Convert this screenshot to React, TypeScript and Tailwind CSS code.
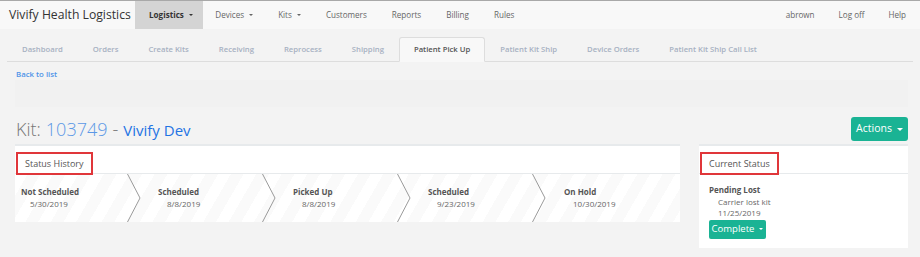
import React from "react";

function Caret({ size = 3 }: { size?: number }) {
  return (
    <span
      className="inline-block w-0 h-0 border-l-[3px] border-r-[3px] border-t-[3px] border-l-transparent border-r-transparent border-t-current ml-[5px] align-middle"
      style={{ borderLeftWidth: size, borderRightWidth: size, borderTopWidth: size }}
    />
  );
}

const navItems = [
  { label: "Logistics", caret: true, active: true },
  { label: "Devices", caret: true },
  { label: "Kits", caret: true },
  { label: "Customers" },
  { label: "Reports" },
  { label: "Billing" },
  { label: "Rules" },
];

const tabs = [
  "Dashboard",
  "Orders",
  "Create Kits",
  "Receiving",
  "Reprocess",
  "Shipping",
  "Patient Pick Up",
  "Patient Kit Ship",
  "Device Orders",
  "Patient Kit Ship Call List",
];

const steps = [
  { label: "Not Scheduled", date: "5/30/2019" },
  { label: "Scheduled", date: "8/8/2019" },
  { label: "Picked Up", date: "8/8/2019" },
  { label: "Scheduled", date: "9/23/2019" },
  { label: "On Hold", date: "10/30/2019" },
];

export default function App() {
  return (
    <div className="w-[920px] h-[257px] overflow-hidden bg-[#f3f3f3] font-['Open_Sans',sans-serif]">
      {/* Top navbar */}
      <nav className="h-[29px] bg-[#f8f8f8] border-t border-[#a8a8a8] flex items-stretch">
        <div className="w-[135px] pl-[9px] flex items-center text-[12.2px] text-[#333] whitespace-nowrap">
          Vivify Health Logistics
        </div>
        <div className="flex items-stretch text-[8.1px]">
          {navItems.map((n) => (
            <div
              key={n.label}
              className={
                n.active
                  ? "flex items-center pl-[14px] pr-[10px] bg-[#d4d4d4] font-bold text-[#333]"
                  : "flex items-center px-[12.5px] text-[#666]"
              }
            >
              {n.label}
              {n.caret && <Caret size={2.5} />}
            </div>
          ))}
        </div>
        <div className="ml-auto flex items-stretch text-[8.1px] text-[#666] pr-[2px]">
          <div className="flex items-center px-[12px]">abrown</div>
          <div className="flex items-center px-[12px]">Log off</div>
          <div className="flex items-center px-[12px]">Help</div>
        </div>
      </nav>

      {/* Tabs */}
      <div className="mx-[7px] h-[33px] flex items-end border-b border-[#dddddd]">
        {tabs.map((t) => {
          const active = t === "Patient Pick Up";
          return (
            <div
              key={t}
              className={
                active
                  ? "h-[25px] mb-[-1px] px-[14px] flex items-center border border-[#dddddd] border-b-transparent rounded-t-[3px] bg-[#f8f8f8] text-[7.7px] font-semibold text-[#555] whitespace-nowrap"
                  : "h-[25px] mb-[-1px] px-[14px] flex items-center border border-transparent text-[7.7px] font-semibold text-[#a7b1c2] whitespace-nowrap"
              }
            >
              {t}
            </div>
          );
        })}
      </div>

      {/* Back to list */}
      <div className="mt-[7px] pl-[16px] h-[10px] leading-[10px] text-[7.8px] font-semibold text-[#4f93e8]">
        Back to list
      </div>

      {/* subtle band */}
      <div className="ml-[15px] w-[893px] h-[27px] mt-[1px] bg-[#f1f1f1]" />

      {/* Kit heading */}
      <div className="ml-[15px] w-[893px] mt-[10px] h-[24px] flex items-center justify-between">
        <div className="flex items-baseline pl-[1px] whitespace-nowrap">
          <span className="text-[18px] font-light text-[#777]">Kit: </span>
          <span className="text-[18px] font-light text-[#5b98e6] ml-[5px]">103749</span>
          <span className="text-[18px] font-light text-[#777] ml-[5px]">-</span>
          <span className="text-[15px] text-[#1f74e4] ml-[5px]">Vivify Dev</span>
        </div>
        <div className="w-[57px] h-[24px] rounded-[3px] bg-[#1ab394] text-white text-[10.5px] flex items-center justify-center">
          Actions
          <Caret size={3} />
        </div>
      </div>

      {/* Panels */}
      <div className="ml-[15px] w-[893px] mt-[3px] flex gap-[19px] items-start">
        {/* Status History */}
        <div className="w-[665px] bg-white border-t-2 border-[#e7eaec]">
          <div className="h-[28px] border-b border-[#e7eaec] pt-[3px] pl-[1px]">
            <div className="inline-flex items-center h-[23px] border-2 border-[#e0363a] px-[7px] text-[9px] text-[#555]">
              Status History
            </div>
          </div>
          <div className="h-[48px] flex bg-[repeating-linear-gradient(120deg,#ffffff_0px,#ffffff_11px,#fafafa_11px,#fafafa_22px)]">
            {steps.map((s, i) => (
              <div
                key={i}
                className={
                  i === 0
                    ? "relative w-[113px] h-full pl-[6px] flex flex-col justify-center"
                    : i === 4
                    ? "relative flex-1 h-full pl-[31px] flex flex-col justify-center"
                    : "relative w-[135px] h-full pl-[30px] flex flex-col justify-center"
                }
              >
                <div className="text-[8px] font-bold text-[#555] leading-[12px] whitespace-nowrap">{s.label}</div>
                <div className="text-[8px] text-[#666] leading-[12px] pl-[9px] whitespace-nowrap">{s.date}</div>
                {i < 4 && (
                  <svg
                    className="absolute top-0 right-[-13px]"
                    width="14"
                    height="48"
                    viewBox="0 0 14 48"
                  >
                    <polyline points="0.5,0 13,24 0.5,48" fill="none" stroke="#9a9a9a" strokeWidth="1" />
                  </svg>
                )}
              </div>
            ))}
          </div>
        </div>

        {/* Current Status */}
        <div className="w-[209px] bg-white border-t-2 border-[#e7eaec]">
          <div className="h-[28px] border-b border-[#e7eaec] pt-[3px] pl-[1px]">
            <div className="inline-flex items-center h-[23px] border-2 border-[#e0363a] px-[7px] text-[9px] text-[#555]">
              Current Status
            </div>
          </div>
          <div className="h-[74px] pt-[10px] pl-[10px]">
            <div className="text-[8px] font-bold text-[#555] leading-[11.5px]">Pending Lost</div>
            <div className="text-[8px] text-[#666] leading-[11.5px] pl-[9px]">Carrier lost kit</div>
            <div className="text-[8px] text-[#666] leading-[11.5px] pl-[9px]">11/25/2019</div>
            <div className="mt-[1px] w-[57px] h-[19px] rounded-[2px] bg-[#1ab394] text-white text-[9.5px] flex items-center justify-center">
              Complete
              <Caret size={2.5} />
            </div>
          </div>
        </div>
      </div>
    </div>
  );
}
